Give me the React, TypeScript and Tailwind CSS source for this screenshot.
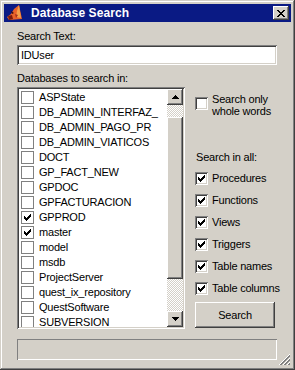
import React from 'react';

const sunken =
  'shadow-[inset_1px_1px_#808080,inset_-1px_-1px_#ffffff,inset_2px_2px_#404040,inset_-2px_-2px_#d4d0c8]';
const raised =
  'shadow-[inset_-1px_-1px_#404040,inset_1px_1px_#ffffff,inset_-2px_-2px_#808080,inset_2px_2px_#d4d0c8]';

const databases = [
  { name: 'ASPState', on: false },
  { name: 'DB_ADMIN_INTERFAZ_', on: false },
  { name: 'DB_ADMIN_PAGO_PR', on: false },
  { name: 'DB_ADMIN_VIATICOS', on: false },
  { name: 'DOCT', on: false },
  { name: 'GP_FACT_NEW', on: false },
  { name: 'GPDOC', on: false },
  { name: 'GPFACTURACION', on: false },
  { name: 'GPPROD', on: true },
  { name: 'master', on: true },
  { name: 'model', on: false },
  { name: 'msdb', on: false },
  { name: 'ProjectServer', on: false },
  { name: 'quest_ix_repository', on: false },
  { name: 'QuestSoftware', on: false },
  { name: 'SUBVERSION', on: false },
];

const objects = ['Procedures', 'Functions', 'Views', 'Triggers', 'Table names', 'Table columns'];

const Tick = () => (
  <svg width="7" height="7" viewBox="0 0 7 7" shapeRendering="crispEdges">
    <g fill="#000">
      <rect x="6" y="0" width="1" height="1" />
      <rect x="5" y="1" width="2" height="1" />
      <rect x="0" y="2" width="1" height="1" />
      <rect x="4" y="2" width="3" height="1" />
      <rect x="0" y="3" width="2" height="1" />
      <rect x="3" y="3" width="3" height="1" />
      <rect x="0" y="4" width="5" height="1" />
      <rect x="1" y="5" width="3" height="1" />
      <rect x="2" y="6" width="1" height="1" />
    </g>
  </svg>
);

const Check3D = ({ on }: { on: boolean }) => (
  <div className={`w-[13px] h-[13px] shrink-0 bg-white flex items-center justify-center ${sunken}`}>
    {on && <Tick />}
  </div>
);

const FlatCheck = ({ on }: { on: boolean }) => (
  <div className="w-[13px] h-[13px] shrink-0 bg-white border border-[#808080] flex items-center justify-center">
    {on && <Tick />}
  </div>
);

const Arrow = ({ up }: { up: boolean }) => (
  <svg width="7" height="4" viewBox="0 0 7 4" shapeRendering="crispEdges">
    <path d={up ? 'M3 0h1v1h1v1h1v1h1v1H0V3h1V2h1V1h1z' : 'M0 0h7v1H6v1H5v1H4v1H3V3H2V2H1V1H0z'} fill="#000" />
  </svg>
);

const App: React.FC = () => {
  return (
    <div
      className="relative w-[295px] h-[370px] p-[4px] bg-[#d4d0c8] text-black text-[11px] leading-[13px] tracking-[-0.2px] shadow-[inset_-1px_-1px_#404040,inset_1px_1px_#d4d0c8,inset_-2px_-2px_#808080,inset_2px_2px_#ffffff]"
      style={{ fontFamily: '"Liberation Sans", Arial, sans-serif' }}
    >
      {/* title bar */}
      <div className="h-[18px] bg-[#0a1a84] flex items-center pl-[2px] pr-[2px]">
        <svg width="17" height="16" viewBox="0 0 17 16" className="shrink-0">
          <path d="M13 0 L16 14 L3 15 L1 12 L5 9 L8 4 Z" fill="#e8622a" />
          <path d="M13 0 L15 13 L10 12 L11 6 Z" fill="#f4a04a" />
          <path d="M2 11 L6 10 L7 14 L3 15 Z" fill="#7a1c0c" />
          <path d="M5 6 L8 8 L6 9 Z" fill="#3a0c04" />
          <path d="M9 9 L12 10 L10 13 Z" fill="#a8301a" />
        </svg>
        <span className="ml-[8px] text-white font-bold text-[12px] leading-[18px] tracking-[0.1px]">Database Search</span>
        <div className={`ml-auto w-[16px] h-[14px] bg-[#d4d0c8] flex items-center justify-center ${raised}`}>
          <svg width="8" height="7" viewBox="0 0 8 7" shapeRendering="crispEdges">
            <path d="M0 0h2v1h1v1h2V1h1V0h2v1H7v1H6v1H5v1h1v1h1v1h1v1H6V6H5V5H3v1H2v1H0V6h1V5h1V4h1V3H2V2H1V1H0z" fill="#000" />
          </svg>
        </div>
      </div>

      {/* body */}
      <div className="pl-[13px] pr-[14px] pt-[8px]">
        <div>Search Text:</div>
        <div className={`mt-[2px] h-[20px] bg-white pl-[4px] flex items-center ${sunken}`}>IDUser</div>

        <div className="mt-[7px]">Databases to search in:</div>

        <div className="mt-[2px] flex gap-[10px]">
          {/* list */}
          <div className={`w-[168px] h-[242px] shrink-0 bg-white p-[2px] flex ${sunken}`}>
            <div className="flex-1 overflow-hidden pt-[1px]">
              {databases.map((d) => (
                <div key={d.name} className="h-[15px] flex items-center pl-[2px] whitespace-nowrap">
                  <FlatCheck on={d.on} />
                  <span className="ml-[5px]">{d.name}</span>
                </div>
              ))}
            </div>
            <div className="w-[16px] flex flex-col">
              <div className={`h-[16px] bg-[#d4d0c8] flex items-center justify-center ${raised}`}>
                <Arrow up />
              </div>
              <div className="h-[12px] bg-[repeating-conic-gradient(#d4d0c8_0_25%,#ffffff_0_50%)] bg-[length:2px_2px]" />
              <div className={`h-[162px] bg-[#d4d0c8] ${raised}`} />
              <div className="flex-1 bg-[repeating-conic-gradient(#d4d0c8_0_25%,#ffffff_0_50%)] bg-[length:2px_2px]" />
              <div className={`h-[16px] bg-[#d4d0c8] flex items-center justify-center ${raised}`}>
                <Arrow up={false} />
              </div>
            </div>
          </div>

          {/* options */}
          <div className="flex-1 flex flex-col pt-[6px] whitespace-nowrap">
            <div className="flex items-start">
              <div className="mt-[4px]">
                <Check3D on={false} />
              </div>
              <div className="ml-[4px] leading-[12px]">
                Search only
                <br />
                whole words
              </div>
            </div>
            <div className="mt-[34px] pl-[1px]">Search in all:</div>
            <div className="mt-[3px]">
              {objects.map((o) => (
                <div key={o} className="h-[22px] flex items-center">
                  <Check3D on />
                  <span className="ml-[4px]">{o}</span>
                </div>
              ))}
            </div>
            <button className="mt-[3px] w-[80px] h-[26px] bg-[#d4d0c8] text-[11px] flex items-center justify-center shadow-[inset_-1px_-1px_#404040,inset_1px_1px_#ffffff,inset_-2px_-2px_#808080]">
              Search
            </button>
          </div>
        </div>

        {/* status */}
        <div className="mt-[10px] h-[21px] shadow-[inset_1px_1px_#808080,inset_-1px_-1px_#ffffff]" />
      </div>

      {/* size grip */}
      <svg width="12" height="12" viewBox="0 0 12 12" shapeRendering="crispEdges" className="absolute right-[4px] bottom-[4px]">
        <path d="M11 0 L0 11" stroke="#ffffff" />
        <path d="M11 1 L1 11 M11 2 L2 11" stroke="#808080" />
        <path d="M11 4 L4 11" stroke="#ffffff" />
        <path d="M11 5 L5 11 M11 6 L6 11" stroke="#808080" />
        <path d="M11 8 L8 11" stroke="#ffffff" />
        <path d="M11 9 L9 11 M11 10 L10 11" stroke="#808080" />
      </svg>
    </div>
  );
};

export default App;
